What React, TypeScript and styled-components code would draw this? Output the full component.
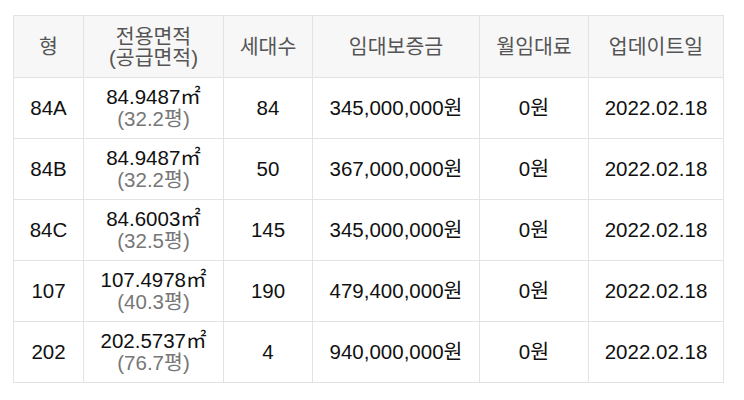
import React from "react";
import styled, { createGlobalStyle } from "styled-components";

const Global = createGlobalStyle`
  html, body { margin: 0; padding: 0; background: #fff; }
  body { font-family: "Liberation Sans", "Noto Sans CJK KR", sans-serif; }
`;

const Wrap = styled.div`
  padding: 15px 21px 0 13px;
`;

const Table = styled.table`
  width: 710px;
  border-collapse: collapse;
  table-layout: fixed;
  font-size: 20.5px;
  color: #111;
`;

const Th = styled.th`
  background: #f7f7f7;
  color: #555;
  font-weight: normal;
  border: 1px solid #e3e3e3;
  height: 61px;
  line-height: 21px;
  text-align: center;
  vertical-align: middle;
  padding: 0;
`;

const Td = styled.td`
  border: 1px solid #e3e3e3;
  height: 60px;
  line-height: 22px;
  text-align: center;
  vertical-align: middle;
  padding: 0;
`;

const Sub = styled.div`
  color: #777;
`;

const widths = [70, 140, 89, 167, 109, 135];

const rows = [
  ["84A", "84.9487", "32.2", "84", "345,000,000"],
  ["84B", "84.9487", "32.2", "50", "367,000,000"],
  ["84C", "84.6003", "32.5", "145", "345,000,000"],
  ["107", "107.4978", "40.3", "190", "479,400,000"],
  ["202", "202.5737", "76.7", "4", "940,000,000"],
];

export default function App() {
  return (
    <>
      <Global />
      <Wrap>
        <Table>
          <colgroup>
            {widths.map((w, i) => (
              <col key={i} style={{ width: w }} />
            ))}
          </colgroup>
          <thead>
            <tr>
              <Th>형</Th>
              <Th>
                전용면적
                <br />
                (공급면적)
              </Th>
              <Th>세대수</Th>
              <Th>임대보증금</Th>
              <Th>월임대료</Th>
              <Th>업데이트일</Th>
            </tr>
          </thead>
          <tbody>
            {rows.map((r) => (
              <tr key={r[0]}>
                <Td>{r[0]}</Td>
                <Td>
                  <div>{r[1]}㎡</div>
                  <Sub>({r[2]}평)</Sub>
                </Td>
                <Td>{r[3]}</Td>
                <Td>{r[4]}원</Td>
                <Td>0원</Td>
                <Td>2022.02.18</Td>
              </tr>
            ))}
          </tbody>
        </Table>
      </Wrap>
    </>
  );
}
